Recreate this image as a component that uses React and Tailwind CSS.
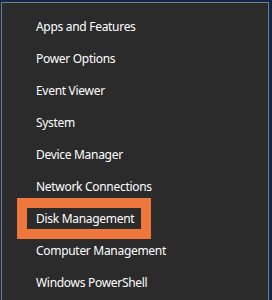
const items = [
  "Apps and Features",
  "Power Options",
  "Event Viewer",
  "System",
  "Device Manager",
  "Network Connections",
  "Disk Management",
  "Computer Management",
  "Windows PowerShell",
]

export default function App() {
  return (
    <div className="w-[272px] h-[300px] bg-[#10294a] pl-px pt-[2px] pr-[3px] overflow-hidden">
      <div
        className="h-full border-l border-t border-r border-[#7d7d7d] bg-[#2b2b2b] pt-[8px]"
        style={{ fontFamily: '"Noto Sans", "Open Sans", sans-serif' }}
      >
        {items.map((label) => (
          <div key={label} className="relative h-[32px] flex items-center pl-[34px] text-[12px] tracking-[-0.3px] text-white">
            {label === "Disk Management" && (
              <div className="absolute left-[15px] top-[-5px] w-[134px] h-[41px] border-[10px] border-[#ed773d]" />
            )}
            <span className="relative">{label}</span>
          </div>
        ))}
      </div>
    </div>
  )
}
